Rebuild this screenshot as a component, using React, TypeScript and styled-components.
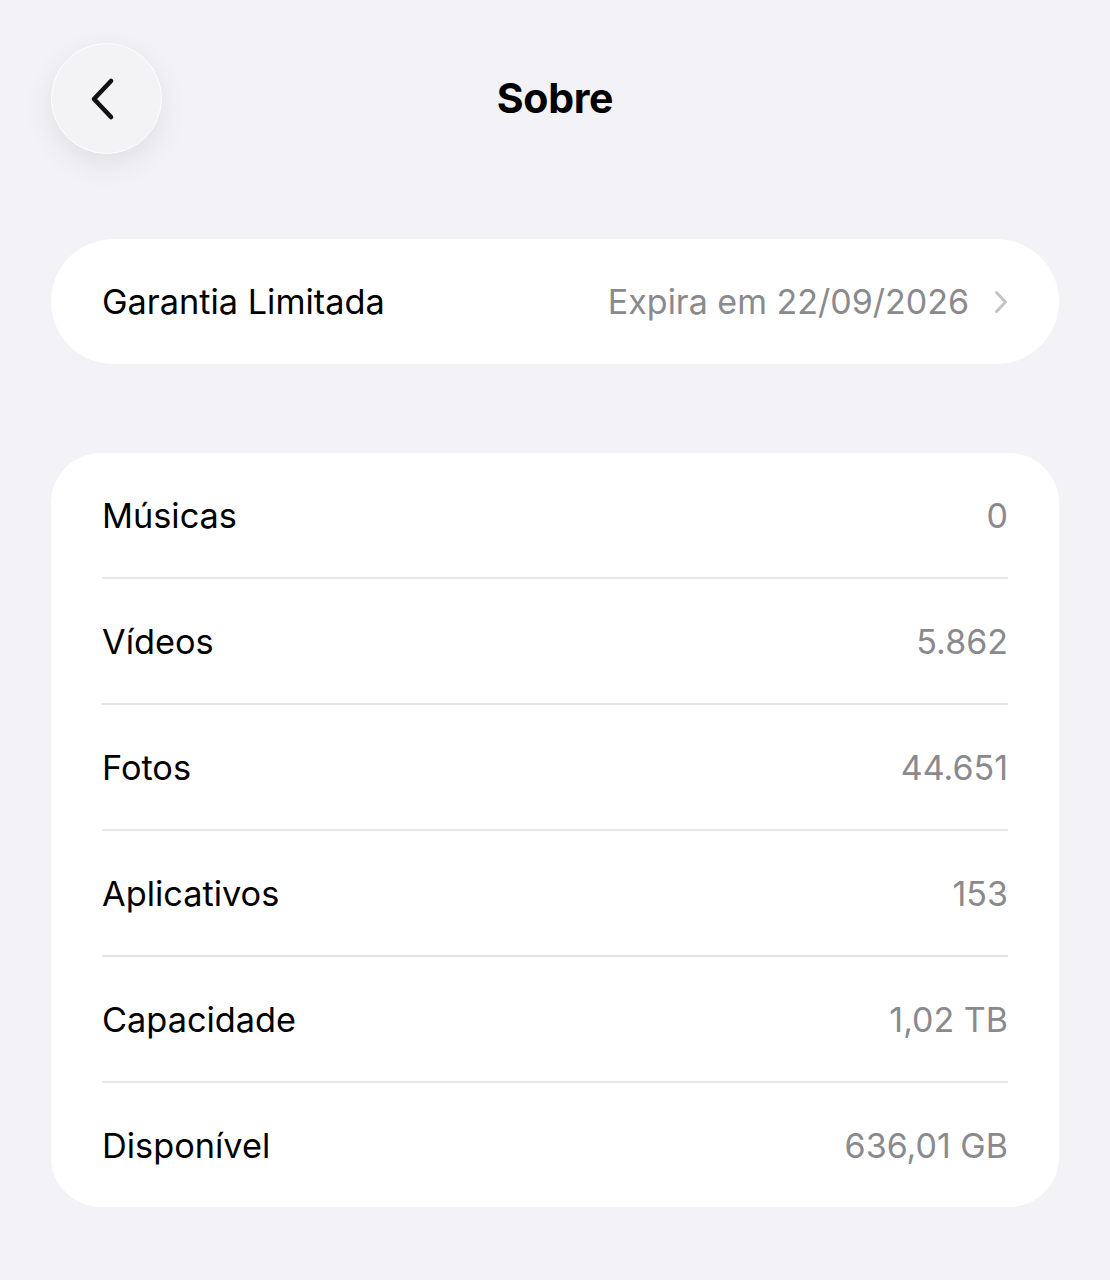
import React from 'react';
import styled, { createGlobalStyle } from 'styled-components';

const GlobalStyle = createGlobalStyle`
  html, body {
    margin: 0;
    padding: 0;
    background: #f2f2f7;
  }
  body {
    font-family: Inter, "Noto Sans", "Liberation Sans", sans-serif;
    -webkit-font-smoothing: antialiased;
  }
`;

const Page = styled.div`
  width: 1110px;
  min-height: 1280px;
  box-sizing: border-box;
  padding: 43px 51px 0 51px;
  background: #f2f2f7;
`;

const Header = styled.header`
  position: relative;
  height: 111px;
  display: flex;
  align-items: center;
  justify-content: center;
`;

const BackButton = styled.button`
  position: absolute;
  left: 0;
  top: 0;
  width: 111px;
  height: 111px;
  border-radius: 50%;
  border: 1px solid #ffffff;
  background: #f3f3f6;
  box-shadow: 0 10px 30px rgba(0, 0, 0, 0.08);
  display: flex;
  align-items: center;
  justify-content: center;
  padding: 0 6px 0 0;
  cursor: pointer;
`;

const Title = styled.h1`
  margin: 0;
  font-size: 41px;
  font-weight: 700;
  color: #000;
  letter-spacing: -0.3px;
  margin-top: -2px;
`;

const Card = styled.section<{ $radius: number; $top: number }>`
  background: #fff;
  border-radius: ${(p) => p.$radius}px;
  margin-top: ${(p) => p.$top}px;
  padding: 0 51px;
`;

const Row = styled.div<{ $last?: boolean }>`
  height: ${(p) => (p.$last ? 124 : 126)}px;
  display: flex;
  align-items: center;
  justify-content: space-between;
  border-bottom: ${(p) => (p.$last ? 'none' : '2px solid #e4e4e9')};
  box-sizing: border-box;
`;

const Label = styled.span`
  font-size: 34.3px;
  color: #000;
`;

const Value = styled.span`
  font-size: 34px;
  color: #8a8a8e;
  display: flex;
  align-items: center;
  gap: 25px;
`;

const stats: [string, string][] = [
  ['Músicas', '0'],
  ['Vídeos', '5.862'],
  ['Fotos', '44.651'],
  ['Aplicativos', '153'],
  ['Capacidade', '1,02 TB'],
  ['Disponível', '636,01 GB'],
];

export default function App() {
  return (
    <>
      <GlobalStyle />
      <Page>
        <Header>
          <BackButton aria-label="Voltar">
            <svg width="30" height="44" viewBox="0 0 30 44" fill="none">
              <path d="M22 4 L5 22 L22 40" stroke="#111" strokeWidth="4.6" strokeLinecap="round" strokeLinejoin="round" />
            </svg>
          </BackButton>
          <Title>Sobre</Title>
        </Header>

        <Card $radius={63} $top={85}>
          <Row $last style={{ height: 125 }}>
            <Label>Garantia Limitada</Label>
            <Value>
              Expira em 22/09/2026
              <svg width="14" height="24" viewBox="0 0 14 24" fill="none">
                <path d="M2.5 2.5 L11.5 12 L2.5 21.5" stroke="#c4c4c7" strokeWidth="3" strokeLinecap="round" strokeLinejoin="round" />
              </svg>
            </Value>
          </Row>
        </Card>

        <Card $radius={50} $top={89}>
          {stats.map(([label, value], i) => (
            <Row key={label} $last={i === stats.length - 1}>
              <Label>{label}</Label>
              <Value>{value}</Value>
            </Row>
          ))}
        </Card>
      </Page>
    </>
  );
}
